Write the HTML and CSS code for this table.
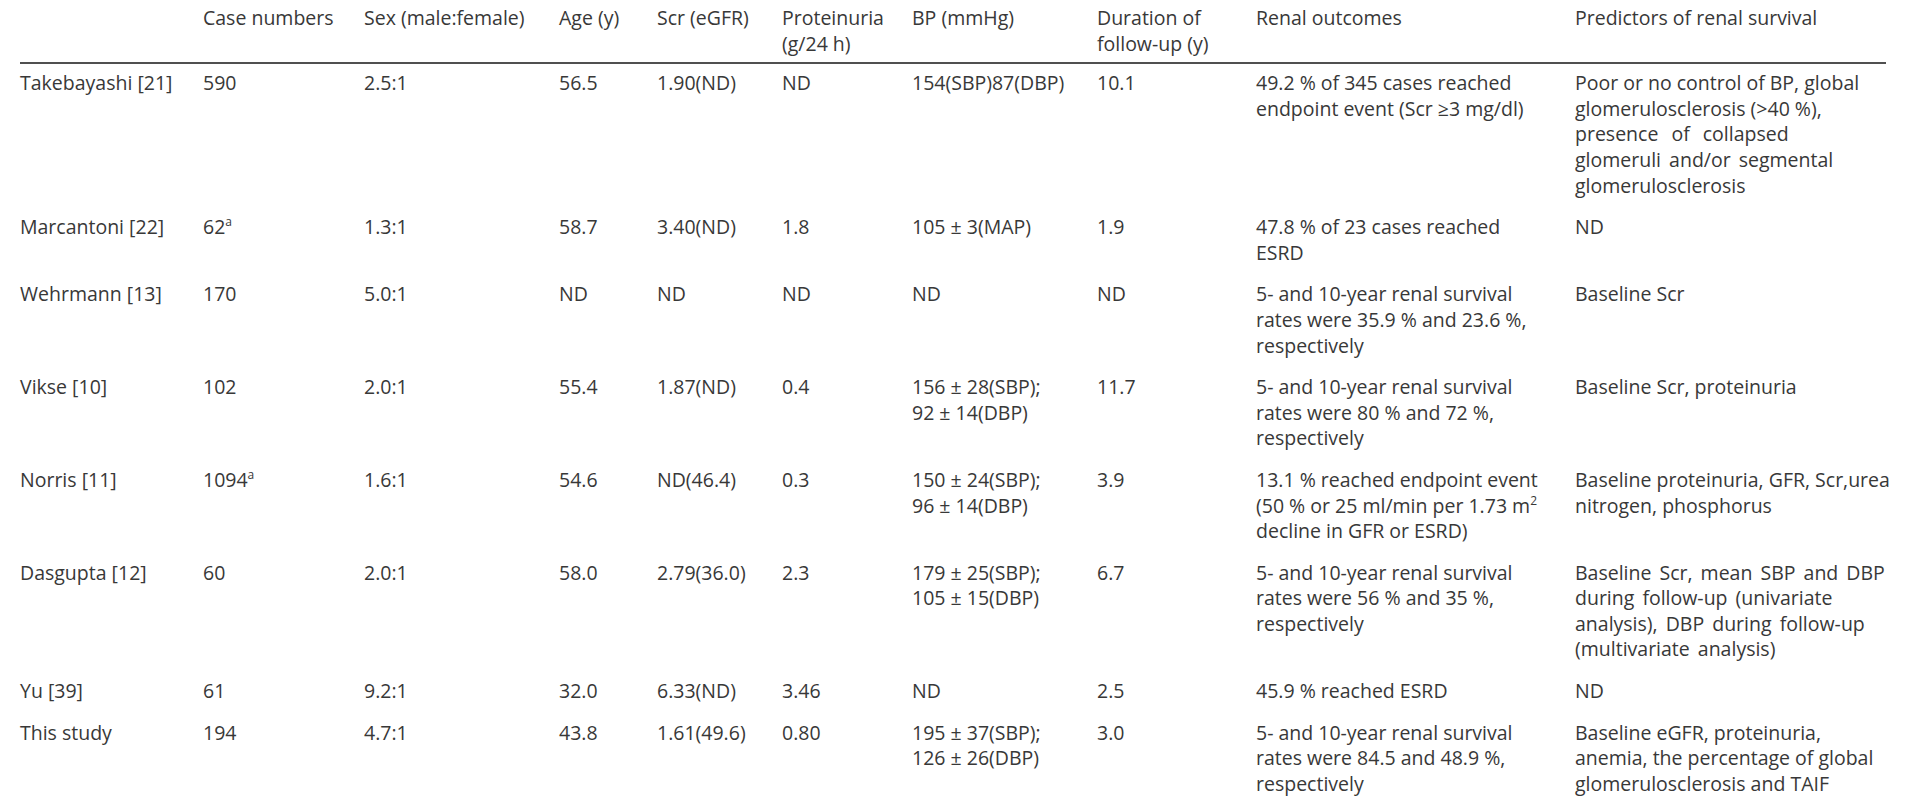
FILE: index.html
```html
<!DOCTYPE html>
<html lang="en">
<head>
<meta charset="utf-8">
<title>Renal outcomes comparison</title>
<link rel="stylesheet" href="styles.css">
</head>
<body>
<table class="data">
  <colgroup>
    <col class="c-study"><col class="c-cases"><col class="c-sex"><col class="c-age"><col class="c-scr">
    <col class="c-prot"><col class="c-bp"><col class="c-dur"><col class="c-out"><col class="c-pred">
  </colgroup>
  <thead>
    <tr>
      <th></th>
      <th>Case numbers</th>
      <th>Sex (male:female)</th>
      <th>Age (y)</th>
      <th>Scr (eGFR)</th>
      <th>Proteinuria<br>(g/24 h)</th>
      <th>BP (mmHg)</th>
      <th>Duration of<br>follow-up (y)</th>
      <th>Renal outcomes</th>
      <th>Predictors of renal survival</th>
    </tr>
  </thead>
  <tbody>
    <tr>
      <td>Takebayashi [21]</td><td>590</td><td>2.5:1</td><td>56.5</td><td>1.90(ND)</td><td>ND</td>
      <td>154(SBP)87(DBP)</td><td>10.1</td>
      <td>49.2 % of 345 cases reached<br>endpoint event (Scr ≥3 mg/dl)</td>
      <td>Poor or no control of BP, global<br>glomerulosclerosis (&gt;40 %),<br><span class="wide">presence of collapsed</span><br><span class="wide-s">glomeruli and/or segmental</span><br>glomerulosclerosis</td>
    </tr>
    <tr>
      <td>Marcantoni [22]</td><td>62<sup>a</sup></td><td>1.3:1</td><td>58.7</td><td>3.40(ND)</td><td>1.8</td>
      <td>105 ± 3(MAP)</td><td>1.9</td>
      <td>47.8 % of 23 cases reached<br>ESRD</td>
      <td>ND</td>
    </tr>
    <tr>
      <td>Wehrmann [13]</td><td>170</td><td>5.0:1</td><td>ND</td><td>ND</td><td>ND</td>
      <td>ND</td><td>ND</td>
      <td>5- and 10-year renal survival<br>rates were 35.9 % and 23.6 %,<br>respectively</td>
      <td>Baseline Scr</td>
    </tr>
    <tr>
      <td>Vikse [10]</td><td>102</td><td>2.0:1</td><td>55.4</td><td>1.87(ND)</td><td>0.4</td>
      <td>156 ± 28(SBP);<br>92 ± 14(DBP)</td><td>11.7</td>
      <td>5- and 10-year renal survival<br>rates were 80 % and 72 %,<br>respectively</td>
      <td>Baseline Scr, proteinuria</td>
    </tr>
    <tr>
      <td>Norris [11]</td><td>1094<sup>a</sup></td><td>1.6:1</td><td>54.6</td><td>ND(46.4)</td><td>0.3</td>
      <td>150 ± 24(SBP);<br>96 ± 14(DBP)</td><td>3.9</td>
      <td>13.1 % reached endpoint event<br>(50 % or 25 ml/min per 1.73 m<sup>2</sup><br>decline in GFR or ESRD)</td>
      <td>Baseline proteinuria, GFR, Scr,urea<br>nitrogen, phosphorus</td>
    </tr>
    <tr>
      <td>Dasgupta [12]</td><td>60</td><td>2.0:1</td><td>58.0</td><td>2.79(36.0)</td><td>2.3</td>
      <td>179 ± 25(SBP);<br>105 ± 15(DBP)</td><td>6.7</td>
      <td>5- and 10-year renal survival<br>rates were 56 % and 35 %,<br>respectively</td>
      <td><span class="wide-s">Baseline Scr, mean SBP and DBP</span><br><span class="wide-s">during follow-up (univariate</span><br><span class="wide-s">analysis), DBP during follow-up</span><br><span class="wide-s">(multivariate analysis)</span></td>
    </tr>
    <tr>
      <td>Yu [39]</td><td>61</td><td>9.2:1</td><td>32.0</td><td>6.33(ND)</td><td>3.46</td>
      <td>ND</td><td>2.5</td>
      <td>45.9 % reached ESRD</td>
      <td>ND</td>
    </tr>
    <tr>
      <td>This study</td><td>194</td><td>4.7:1</td><td>43.8</td><td>1.61(49.6)</td><td>0.80</td>
      <td>195 ± 37(SBP);<br>126 ± 26(DBP)</td><td>3.0</td>
      <td>5- and 10-year renal survival<br>rates were 84.5 and 48.9 %,<br>respectively</td>
      <td>Baseline eGFR, proteinuria,<br>anemia, the percentage of global<br>glomerulosclerosis and TAIF</td>
    </tr>
  </tbody>
</table>
</body>
</html>
```

FILE: styles.css
```css
html, body {
  margin: 0;
  padding: 0;
  background: #ffffff;
}

body {
  font-family: "Open Sans", "Noto Sans", "Liberation Sans", sans-serif;
  font-size: 19.5px;
  line-height: 25.6px;
  color: #383838;
}

.data {
  margin-left: 20px;
  width: 1866px;
  table-layout: fixed;
  border-collapse: collapse;
  border-spacing: 0;
}

.c-study { width: 183px; }
.c-cases { width: 161px; }
.c-sex   { width: 195px; }
.c-age   { width: 98px; }
.c-scr   { width: 125px; }
.c-prot  { width: 130px; }
.c-bp    { width: 185px; }
.c-dur   { width: 159px; }
.c-out   { width: 319px; }
.c-pred  { width: 311px; }

.data th,
.data td {
  padding: 0;
  text-align: left;
  vertical-align: top;
  white-space: nowrap;
  font-weight: 400;
}

.data th {
  padding-top: 5px;
  padding-bottom: 6px;
  border-bottom: 2px solid #505050;
}

.data td {
  padding-top: 6px;
  padding-bottom: 10px;
}

.data sup {
  font-size: 12px;
  line-height: 0;
  vertical-align: 8px;
}

.wide { word-spacing: 8px; }
.wide-s { word-spacing: 3px; }
```
